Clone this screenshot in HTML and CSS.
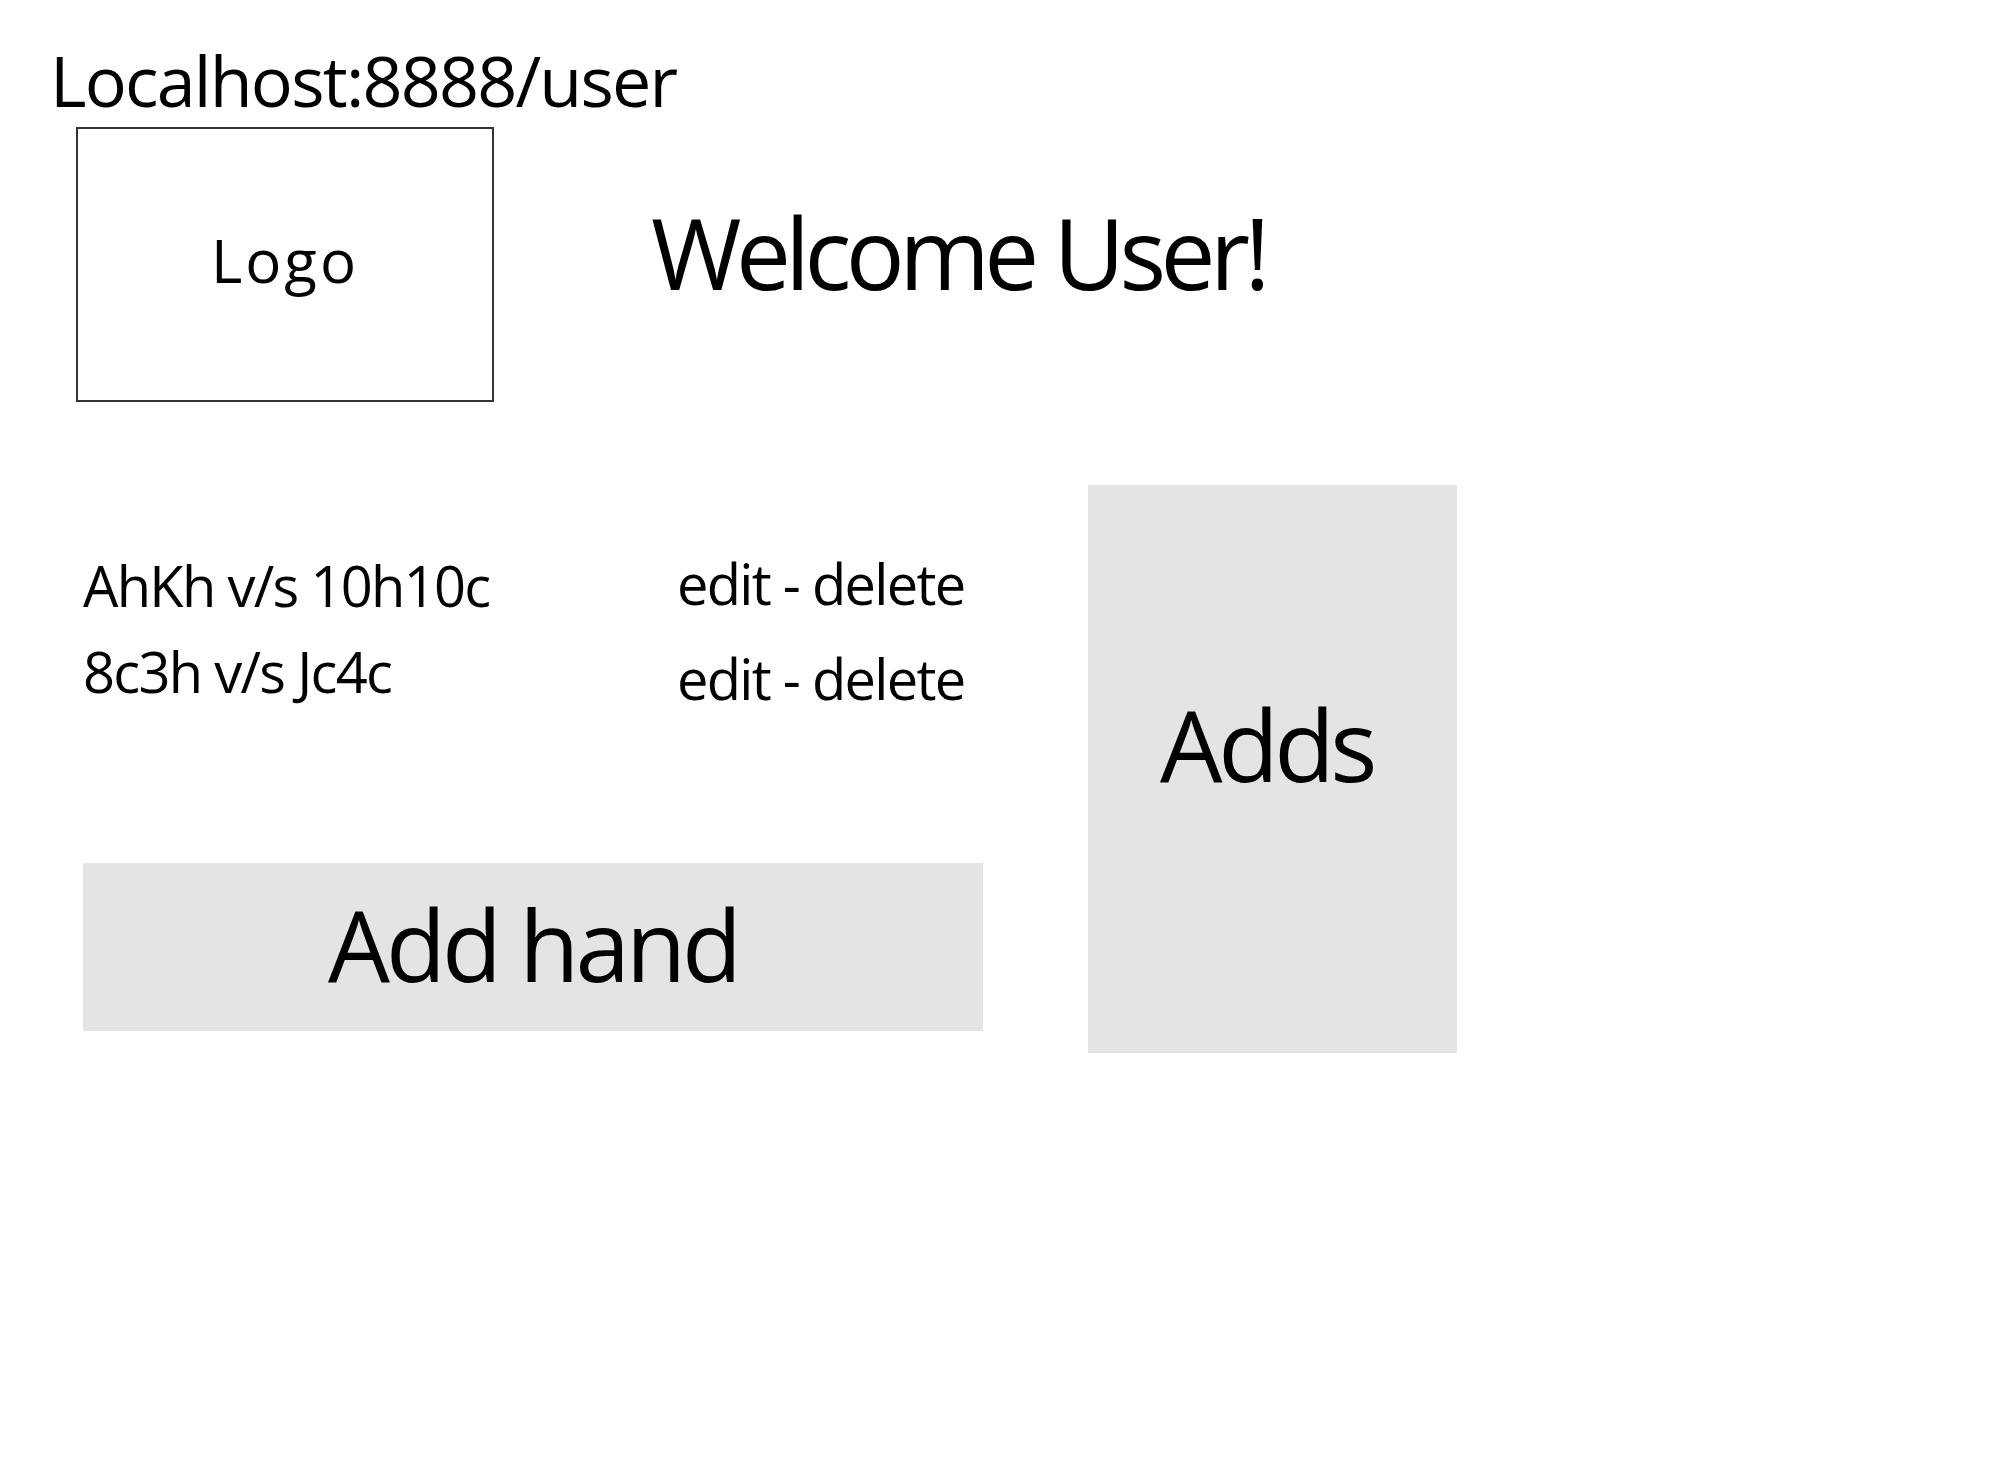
FILE: index.html
```html
<!DOCTYPE html>
<html lang="en">
<head>
<meta charset="utf-8">
<title>User page</title>
<link rel="stylesheet" href="styles.css">
</head>
<body>
<div class="page">
  <div class="url">Localhost:8888/user</div>
  <header class="top">
    <div class="logo">Logo</div>
    <h1 class="welcome">Welcome User!</h1>
  </header>
  <main class="main">
    <section class="left">
      <div class="hands">
        <div class="hand hand-1">
          <span class="hand-label">AhKh v/s 10h10c</span>
          <span class="hand-actions">edit - delete</span>
        </div>
        <div class="hand hand-2">
          <span class="hand-label">8c3h v/s Jc4c</span>
          <span class="hand-actions">edit - delete</span>
        </div>
      </div>
      <div class="add-hand">Add hand</div>
    </section>
    <aside class="ads">Adds</aside>
  </main>
</div>
</body>
</html>
```
FILE: styles.css
```css
html, body {
  margin: 0;
  padding: 0;
  background: #ffffff;
}

body {
  font-family: "Open Sans", "Noto Sans", sans-serif;
  color: #000000;
  width: 2000px;
  height: 1458px;
  overflow: hidden;
}

.page {
  display: flex;
  flex-direction: column;
}

.url {
  font-size: 70px;
  line-height: 70px;
  letter-spacing: -1.8px;
  margin-top: 45px;
  margin-left: 50px;
}

.top {
  display: flex;
  align-items: flex-start;
  margin-top: 12px;
  margin-left: 76px;
}

.logo {
  box-sizing: border-box;
  width: 418px;
  height: 275px;
  border: 2px solid #333333;
  display: flex;
  align-items: center;
  justify-content: center;
  font-size: 60px;
  line-height: 60px;
  letter-spacing: 3px;
  padding-bottom: 10px;
}

.welcome {
  margin: 76px 0 0 157px;
  font-weight: 400;
  font-size: 98px;
  line-height: 98px;
  letter-spacing: -5.6px;
}

.main {
  display: flex;
  gap: 105px;
  margin-top: 83px;
  margin-left: 83px;
}

.left {
  width: 900px;
  display: flex;
  flex-direction: column;
}

.hands {
  display: flex;
  flex-direction: column;
  gap: 30px;
  padding-top: 72px;
}

.hand {
  display: grid;
  grid-template-columns: 594px auto;
  align-items: start;
  font-size: 56px;
  line-height: 56px;
  letter-spacing: -1.7px;
}

.hand-1 .hand-actions {
  margin-top: -2px;
}

.hand-2 .hand-actions {
  margin-top: 7px;
}

.add-hand {
  margin-top: 157px;
  height: 168px;
  background: #e4e4e4;
  display: flex;
  align-items: center;
  justify-content: center;
  font-size: 98px;
  line-height: 98px;
  letter-spacing: -4px;
  padding-bottom: 6px;
  box-sizing: border-box;
}

.ads {
  box-sizing: border-box;
  width: 369px;
  height: 568px;
  background: #e4e4e4;
  padding-top: 209px;
  padding-right: 12px;
  text-align: center;
  font-size: 99px;
  line-height: 99px;
  letter-spacing: -4.5px;
}
```
